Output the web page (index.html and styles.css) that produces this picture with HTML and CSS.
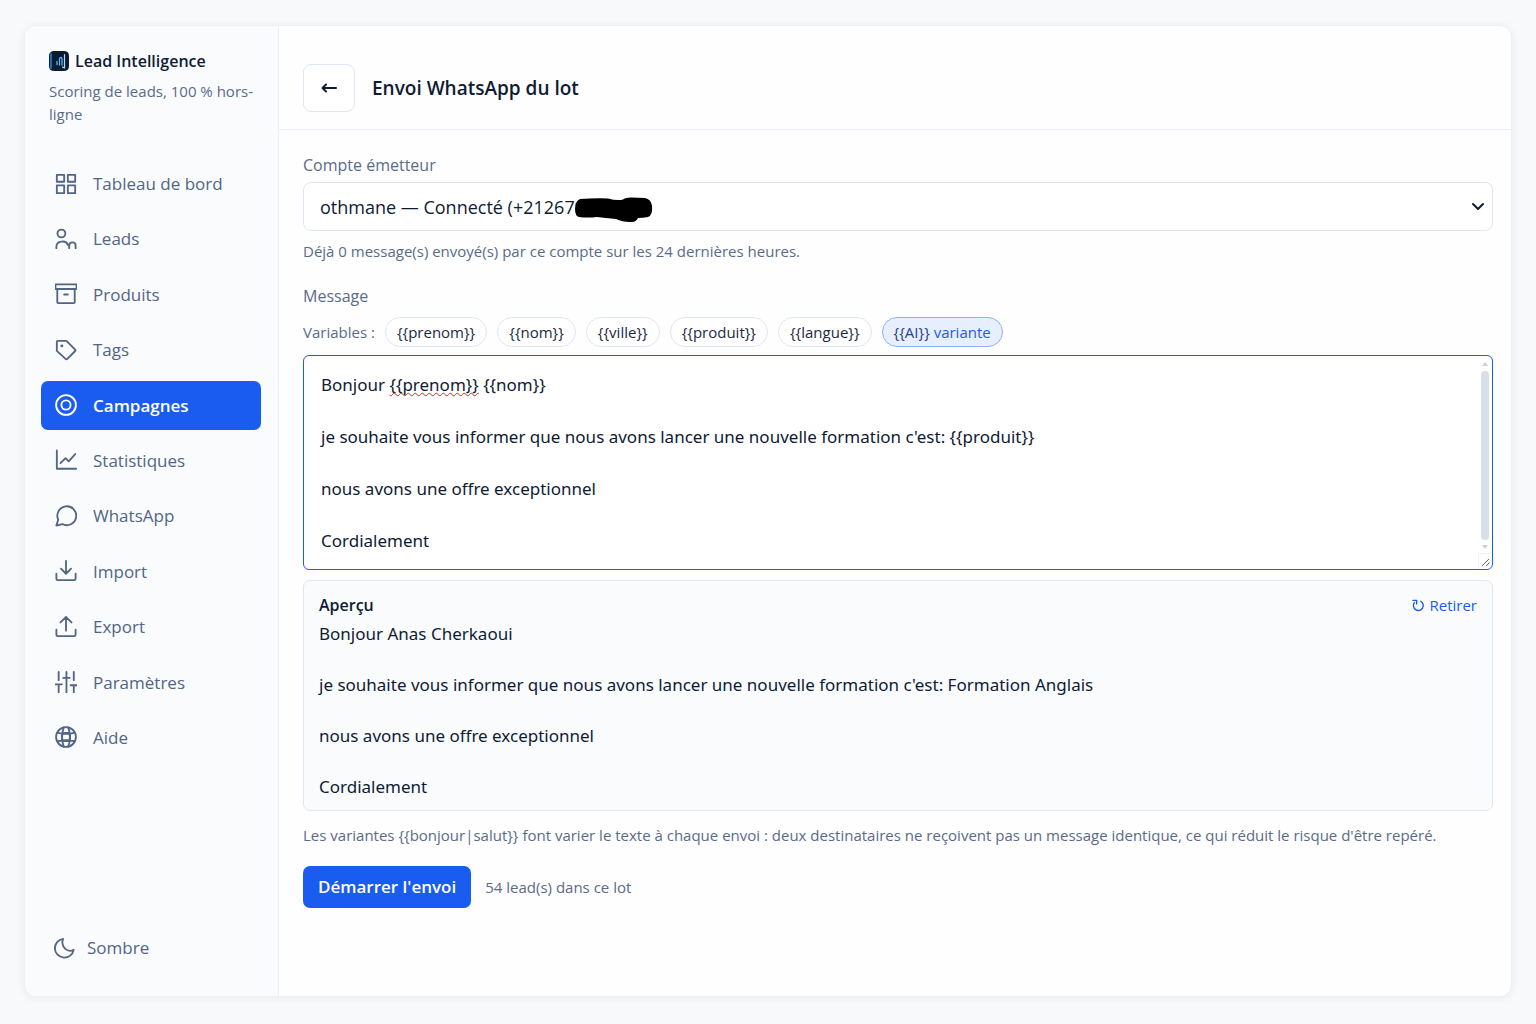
FILE: index.html
```html
<!DOCTYPE html>
<html lang="fr">
<head>
  <meta charset="UTF-8">
  <meta name="viewport" content="width=device-width, initial-scale=1">
  <title>Lead Intelligence - Envoi WhatsApp du lot</title>
  <link rel="stylesheet" href="styles.css">
</head>
<body>
  <div class="app">
    <aside class="sidebar">
      <div class="brand">
        <svg class="brand-logo" viewBox="0 0 20 20">
          <rect x="0.5" y="0.5" width="19" height="19" rx="4" fill="#0b1b33"/>
          <path d="M2 3v14" stroke="#1f6fb5" stroke-width="2"/>
          <path d="M8 13.500v-3M10.500 14v-6c0-2 2.500-2 2.500 0v6" fill="none" stroke="#5fb2f5" stroke-width="1.300"/>
          <path d="M15.500 3.500v13.500l-2-1" fill="none" stroke="#b9d8f3" stroke-width="1.200"/>
        </svg>
        <strong>Lead Intelligence</strong>
      </div>
      <p class="tagline">Scoring de leads, 100 % hors-ligne</p>

      <nav class="nav">
        <a href="#">
          <svg class="icon" viewBox="0 0 24 24"><rect x="2" y="2" width="8" height="7.500"/><rect x="14" y="2" width="8" height="7.500"/><rect x="2" y="13.500" width="8" height="8.500"/><rect x="14" y="13.500" width="8" height="8.500"/></svg>
          Tableau de bord
        </a>
        <a href="#">
          <svg class="icon" viewBox="0 0 24 24"><circle cx="7" cy="6" r="4.300"/><path d="M1.500 22v-1.500c0-7 11-7.500 12.500-2M15.500 22v-3c0-4.500 7-4.500 7 0v3"/></svg>
          Leads
        </a>
        <a href="#">
          <svg class="icon" viewBox="0 0 24 24"><rect x="0.500" y="1.500" width="23" height="5"/><path d="M2.500 6.500v14.500a1 1 0 0 0 1 1h17a1 1 0 0 0 1-1v-14.500M10 12.500h4"/></svg>
          Produits
        </a>
        <a href="#">
          <svg class="icon" viewBox="0 0 24 24"><path d="M2 3a1 1 0 0 1 1-1h9.500L22 11.500a1.200 1.200 0 0 1 0 1.600L13.500 21.700a1.500 1.500 0 0 1-2 0L2 13z"/><circle class="dot" cx="7.500" cy="7.500" r="1.600"/></svg>
          Tags
        </a>
        <a href="#" class="active">
          <svg class="icon" viewBox="0 0 24 24"><circle cx="12" cy="12" r="10.800"/><circle cx="12" cy="12" r="5"/></svg>
          Campagnes
        </a>
        <a href="#">
          <svg class="icon" viewBox="0 0 24 24"><path d="M2 1.500v20h21M6 15.500l5.500-5.500 3.500 3.500 7-8"/></svg>
          Statistiques
        </a>
        <a href="#">
          <svg class="icon" viewBox="0 0 24 24"><path d="M1.500 22.500l2-6.500a10.300 10.300 0 1 1 4.500 4.800z"/></svg>
          WhatsApp
        </a>
        <a href="#">
          <svg class="icon" viewBox="0 0 24 24"><path d="M12 1v14M6.500 9.500l5.500 5.500 5.500-5.500M1.500 15v5.500a1.500 1.500 0 0 0 1.500 1.500h18a1.500 1.500 0 0 0 1.500-1.500v-5.500"/></svg>
          Import
        </a>
        <a href="#">
          <svg class="icon" viewBox="0 0 24 24"><path d="M12 16v-15M6 7l6-6 6 6M1.500 15v5.500a1.500 1.500 0 0 0 1.500 1.500h18a1.500 1.500 0 0 0 1.500-1.500v-5.500"/></svg>
          Export
        </a>
        <a href="#">
          <svg class="icon" viewBox="0 0 24 24"><path d="M4 1v9M0.500 14.500h7M4 14.500v9M12.500 1v22.500M9 7.500h7M20.500 1v9M17 15.500h7M20.500 15.500v8"/></svg>
          Paramètres
        </a>
        <a href="#">
          <svg class="icon" viewBox="0 0 24 24"><circle cx="12" cy="12" r="10.800"/><rect x="7.500" y="7.500" width="9" height="9" rx="3"/><path d="M3 7.500q9 2 18 0M3 16.500q9-2 18 0M9.500 1.500q-3.500 10.500 0 21M14.500 1.500q3.500 10.500 0 21"/></svg>
          Aide
        </a>
      </nav>

      <button type="button" class="theme-toggle">
        <svg class="icon" viewBox="0 0 24 24"><path d="M11 2A10.300 10.300 0 1 0 22.500 14C16 17.500 8 11 11 2z"/></svg>
        Sombre
      </button>
    </aside>

    <main class="main">
      <header class="topbar">
        <button type="button" class="back" aria-label="Retour">
          <svg viewBox="0 0 16 12"><path d="M15 6h-13M5 2.500l-3.500 3.500 3.500 3.500"/></svg>
        </button>
        <h1>Envoi WhatsApp du lot</h1>
      </header>

      <form class="content">
        <label for="compte">Compte émetteur</label>
        <div class="select-wrap">
          <select id="compte">
            <option>othmane — Connecté (+21267&nbsp;&nbsp;&nbsp;&nbsp;&nbsp;&nbsp;&nbsp;&nbsp;&nbsp;&nbsp;&nbsp;&nbsp;&nbsp;&nbsp;&nbsp;)</option>
          </select>
          <svg class="mask" viewBox="0 0 78 26"><path d="M5 2Q20 1 33 1.500Q42 4 48 2.500Q50 .5 56 .5L70 1Q76 2 77 9Q78 18 73 20Q68 21 63 21Q61 25 57 25Q48 25.500 41 22Q30 21 22 20Q12 21 4 20Q0 19 0 12Q0 4 5 2z"/></svg>
          <svg class="chevron" viewBox="0 0 14 10"><path d="M2 2l5 5 5-5"/></svg>
        </div>
        <p class="hint">Déjà 0 message(s) envoyé(s) par ce compte sur les 24 dernières heures.</p>

        <label for="message" class="message-label">Message</label>
        <div class="variables">
          <span>Variables :</span>
          <button type="button" class="chip">{{prenom}}</button>
          <button type="button" class="chip">{{nom}}</button>
          <button type="button" class="chip">{{ville}}</button>
          <button type="button" class="chip">{{produit}}</button>
          <button type="button" class="chip">{{langue}}</button>
          <button type="button" class="chip chip-ai"><span>{{AI}}</span> variante</button>
        </div>

        <div class="editor">
          <textarea id="message" spellcheck="false">Bonjour {{prenom}} {{nom}}

je souhaite vous informer que nous avons lancer une nouvelle formation c'est: {{produit}}

nous avons une offre exceptionnel

Cordialement</textarea>
          <div class="spelling" aria-hidden="true"><span>Bonjour </span><u>{{prenom}}</u></div>
          <div class="scrollbar" aria-hidden="true">
            <i class="up"></i>
            <i class="thumb"></i>
            <i class="down"></i>
            <svg viewBox="0 0 14 16"><path d="M3.500 12.500l7-7M8 12.500l3-3"/></svg>
          </div>
        </div>

        <section class="preview">
          <div class="preview-head">
            <h2>Aperçu</h2>
            <button type="button" class="redraw">
              <svg viewBox="0 0 14 14"><path d="M2.500 4A5.300 5.300 0 1 0 9.500 2.500M1 1.500h4v4"/></svg>
              Retirer
            </button>
          </div>
          <p>Bonjour Anas Cherkaoui</p>
          <p>je souhaite vous informer que nous avons lancer une nouvelle formation c'est: Formation Anglais</p>
          <p>nous avons une offre exceptionnel</p>
          <p>Cordialement</p>
        </section>

        <p class="hint">Les variantes {{bonjour|salut}} font varier le texte à chaque envoi : deux destinataires ne reçoivent pas un message identique, ce qui réduit le risque d'être repéré.</p>

        <div class="actions">
          <button type="button" class="primary">Démarrer l'envoi</button>
          <span>54 lead(s) dans ce lot</span>
        </div>
      </form>
    </main>
  </div>
</body>
</html>
```
FILE: styles.css
```css
* {
  box-sizing: border-box;
}
body {
  margin: 0;
  padding: 25px 24px 27px;
  min-height: 100vh;
  display: flex;
  font-family: "Open Sans", "Liberation Sans", sans-serif;
  font-size: 16px;
  line-height: 24px;
  color: #0f1b33;
  background: #f8f9fb;
}
button,
select,
textarea {
  font: inherit;
  color: inherit;
}
button {
  cursor: pointer;
}
p,
h1,
h2 {
  margin: 0;
}
svg {
  fill: none;
  stroke: currentColor;
  stroke-linecap: round;
  stroke-linejoin: round;
  flex-shrink: 0;
}
.app {
  flex: 1;
  display: flex;
  background: #fefefe;
  border: 1px solid #eef0f4;
  border-radius: 12px;
  box-shadow: 0 1px 8px rgba(15, 27, 51, 0.06);
  overflow: hidden;
}

/* sidebar */
.sidebar {
  width: 254px;
  flex-shrink: 0;
  display: flex;
  flex-direction: column;
  padding: 23px 17px 36px 16px;
  background: #fafbfd;
  border-right: 1px solid #e9edf4;
}
.brand {
  display: flex;
  align-items: center;
  gap: 6px;
  padding-left: 8px;
}
.brand strong {
  font-weight: 600;
}
.brand-logo {
  width: 20px;
  height: 20px;
}
.tagline {
  padding: 7px 0 0 8px;
  font-size: 15px;
  line-height: 23px;
  color: #5a6b87;
}
.nav {
  flex: 1;
  display: flex;
  flex-direction: column;
  justify-content: space-between;
  margin: 33px 0 173px;
}
.nav a,
.theme-toggle {
  display: flex;
  align-items: center;
  gap: 16px;
  padding: 12px 14px;
  font-size: 17px;
  line-height: 25px;
  color: #526583;
  text-decoration: none;
  border-radius: 7px;
}
.nav a.active {
  color: #fff;
  font-weight: 600;
  background: #1b5cf0;
}
.icon {
  width: 22px;
  height: 22px;
  stroke-width: 2;
}
.icon .dot {
  fill: currentColor;
  stroke: none;
}
.theme-toggle {
  gap: 12px;
  padding: 0 12px;
  border: 0;
  background: none;
}

/* main column */
.main {
  flex: 1;
  min-width: 0;
}
.topbar {
  display: flex;
  align-items: center;
  gap: 17px;
  padding: 38px 24px 17px;
  border-bottom: 1px solid #eceff5;
}
.topbar h1 {
  font-size: 19px;
  font-weight: 600;
}
.back {
  width: 52px;
  height: 48px;
  padding: 0;
  display: flex;
  align-items: center;
  justify-content: center;
  background: #fff;
  border: 1px solid #e1e7f2;
  border-radius: 8px;
}
.back svg {
  width: 16px;
  height: 12px;
  stroke-width: 2;
}
.content {
  padding: 23px 18px 24px 24px;
  display: flex;
  flex-direction: column;
}
label,
.hint,
.variables,
.actions {
  color: #5a6b87;
}
.hint {
  font-size: 15px;
}
.select-wrap {
  position: relative;
  margin: 5px 0 8px;
}
.select-wrap select {
  appearance: none;
  width: 100%;
  height: 49px;
  padding: 0 40px 0 16px;
  font-size: 18px;
  background: #fff;
  border: 1px solid #dfe6f1;
  border-radius: 8px;
}
.mask {
  position: absolute;
  left: 272px;
  top: 15px;
  width: 78px;
  height: 26px;
  fill: #000;
  stroke: none;
}
.chevron {
  position: absolute;
  right: 8px;
  top: 20px;
  width: 14px;
  height: 10px;
  stroke-width: 2;
  pointer-events: none;
}
.message-label {
  margin-top: 21px;
}
.variables {
  display: flex;
  flex-wrap: wrap;
  align-items: center;
  gap: 10px;
  margin: 9px 0 8px;
  font-size: 15px;
}
.chip {
  height: 30px;
  padding: 0 11px;
  color: #1c2940;
  background: #fff;
  border: 1px solid #dfe6f1;
  border-radius: 15px;
}
.chip-ai {
  color: #1b5cf0;
  background: #e7effe;
  border-color: #8fb2f8;
}
.chip-ai span {
  color: #23408a;
}

/* message editor */
.editor {
  position: relative;
  display: flex;
}
.editor textarea,
.spelling,
.preview p {
  font-family: "Noto Sans", "Open Sans", sans-serif;
  font-size: 17px;
  line-height: 26px;
}
.editor textarea {
  width: 100%;
  height: 215px;
  padding: 16px 30px 14px 17px;
  background: #fff;
  border: 1px solid #1b5cf0;
  border-radius: 6px;
  outline: none;
  resize: none;
  overflow: hidden;
}
.spelling {
  position: absolute;
  left: 18px;
  top: 17px;
  color: transparent;
  white-space: pre;
  pointer-events: none;
}
.spelling u {
  text-decoration: underline wavy #f01c22 1px;
  text-decoration-skip-ink: none;
}
.scrollbar {
  position: absolute;
  top: 1px;
  right: 1px;
  bottom: 1px;
  width: 14px;
  display: flex;
  flex-direction: column;
  align-items: center;
  padding-top: 6px;
}
.scrollbar .up,
.scrollbar .down {
  border: 3px solid transparent;
}
.scrollbar .up {
  border-top: 0;
  border-bottom: 4px solid #c9d0dd;
}
.scrollbar .down {
  border-bottom: 0;
  border-top: 4px solid #c9d0dd;
}
.scrollbar .thumb {
  flex: 1;
  width: 8px;
  margin: 5px 0;
  background: #d8deea;
  border-radius: 4px;
}
.scrollbar svg {
  width: 14px;
  height: 16px;
  margin-top: 4px;
  color: #4a4f5a;
  border-top: 1px solid #edf0f5;
  border-left: 1px solid #edf0f5;
}

.preview {
  margin: 10px 0 12px;
  padding: 12px 15px 10px;
  background: #fafbfd;
  border: 1px solid #e1e7f2;
  border-radius: 7px;
}
.preview-head {
  display: flex;
  align-items: center;
  justify-content: space-between;
  margin-bottom: 4px;
}
.preview h2 {
  font-size: 16px;
  font-weight: 600;
}
.preview p + p {
  margin-top: 25px;
}
.redraw {
  display: flex;
  align-items: center;
  gap: 5px;
  padding: 0;
  color: #1b5cf0;
  font-size: 15px;
  border: 0;
  background: none;
}
.redraw svg {
  width: 13px;
  height: 13px;
  stroke-width: 1.5;
}

.actions {
  display: flex;
  align-items: center;
  gap: 14px;
  margin-top: 19px;
  font-size: 15px;
}
.primary {
  height: 42px;
  padding: 0 15px;
  color: #fff;
  font-size: 17px;
  font-weight: 600;
  background: #1b5cf0;
  border: 0;
  border-radius: 7px;
}
```
